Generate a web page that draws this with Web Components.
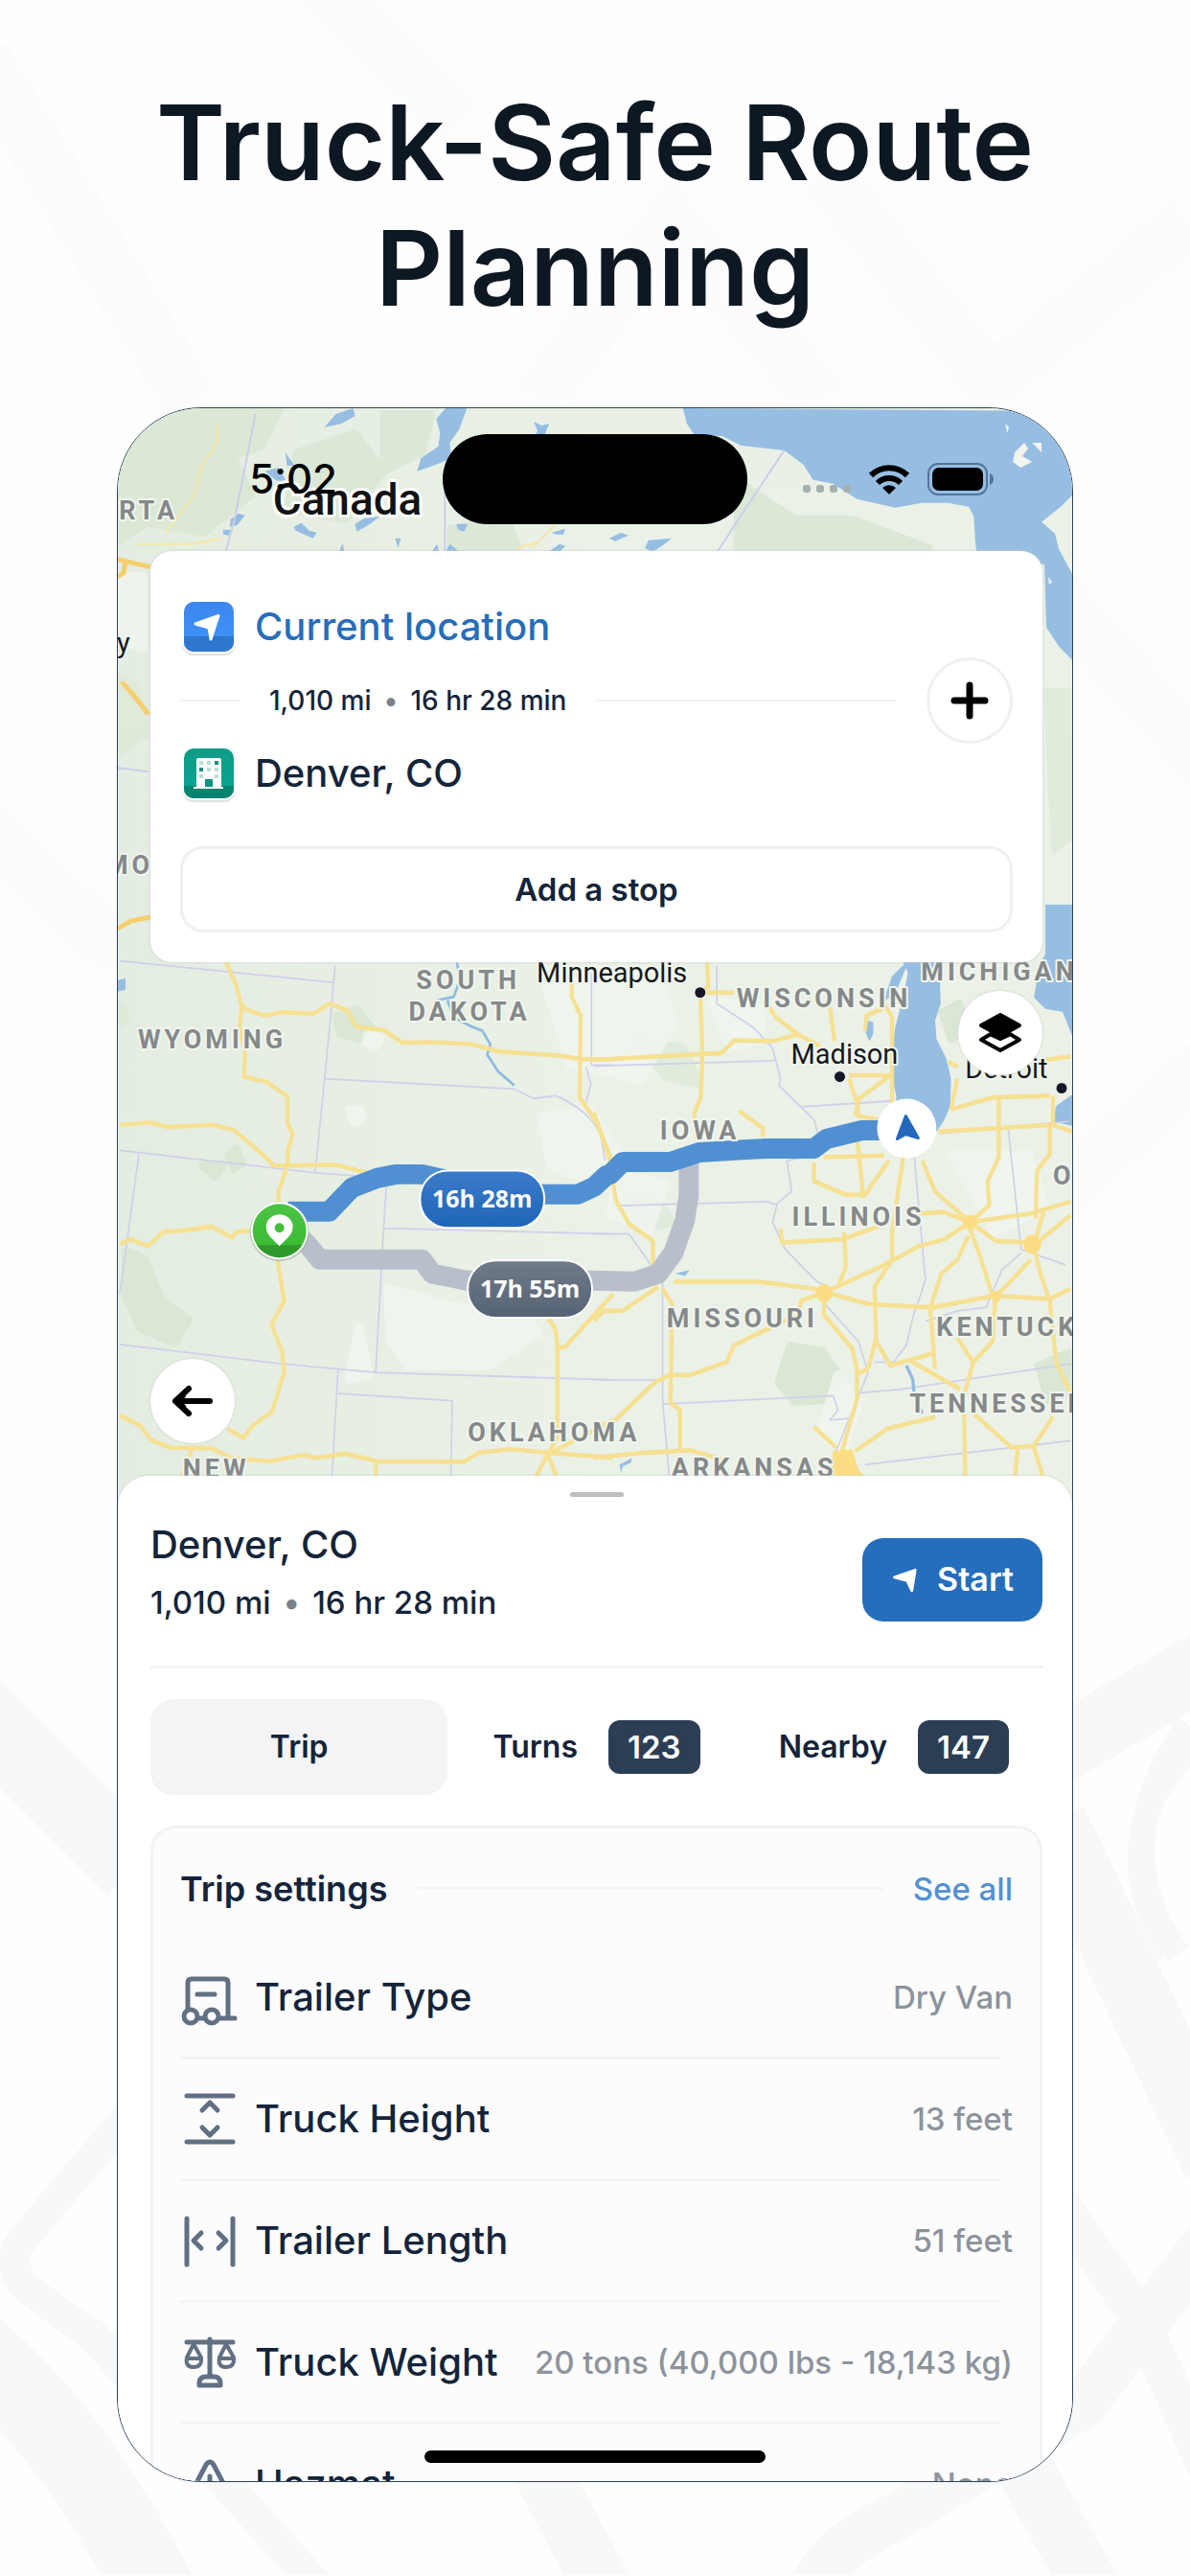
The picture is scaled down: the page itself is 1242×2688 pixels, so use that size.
<!DOCTYPE html>
<html lang="en">
<head>
<meta charset="utf-8">
<meta name="viewport" content="width=device-width, initial-scale=1">
<title>Truck-Safe Route Planning</title>
<style>
  body {
    margin: 0;
    background: #fefefe;
    color: #14243a;
    font-family: Inter, "Liberation Sans", sans-serif;
  }
</style>
</head>
<body>

<promo-screen>
  <span slot="title">Truck-Safe Route Planning</span>
  <phone-frame>
    <route-map>
      <status-bar time="5:02"></status-bar>
      <route-card>
        <route-stop icon="location" accent>Current location</route-stop>
        <trip-summary slot="summary" distance="1,010 mi" duration="16 hr 28 min"></trip-summary>
        <route-stop slot="end" icon="building">Denver, CO</route-stop>
      </route-card>
      <map-button icon="layers" label="Map layers"></map-button>
      <map-button icon="back" label="Back" bottom></map-button>
    </route-map>
    <trip-sheet>
      <span slot="title">Denver, CO</span>
      <trip-summary slot="summary" size="large" distance="1,010 mi" duration="16 hr 28 min"></trip-summary>
      <trip-tab slot="tabs" selected>Trip</trip-tab>
      <trip-tab slot="tabs" count="123">Turns</trip-tab>
      <trip-tab slot="tabs" count="147">Nearby</trip-tab>
      <settings-panel>
        <settings-row icon="trailer" value="Dry Van">Trailer Type</settings-row>
        <settings-row icon="height" value="13 feet">Truck Height</settings-row>
        <settings-row icon="length" value="51 feet">Trailer Length</settings-row>
        <settings-row icon="scales" value="20 tons (40,000 lbs - 18,143 kg)">Truck Weight</settings-row>
        <settings-row icon="hazmat" value="None">Hazmat</settings-row>
      </settings-panel>
    </trip-sheet>
  </phone-frame>
</promo-screen>

<script>
/*
 * Icons, all drawn on a 60 x 60 canvas.
 */
const line = 'fill="none" stroke="currentColor" stroke-linecap="round" stroke-linejoin="round"'

const icons = {
  location: `
    <defs>
      <linearGradient id="g" x2="0" y2="1"><stop stop-color="#3c86ec"/><stop offset="1" stop-color="#3f94fc"/></linearGradient>
      <clipPath id="c"><rect x="4" y="4" width="52" height="52" rx="10"/></clipPath>
    </defs>
    <rect x="2" y="3" width="56" height="57" rx="12" fill="#dfe1e6"/>
    <rect x="2" y="2" width="56" height="56" rx="12" fill="#fff"/>
    <g clip-path="url(#c)"><path fill="url(#g)" d="M0 0h60v60H0z"/><path fill="#2f76cf" d="M0 40h60v20H0z"/></g>
    <path d="M40 18.500 16 27l14 4 2 12z" fill="#fff" stroke="#fff" stroke-width="3" stroke-linejoin="round"/>`,
  building: `
    <defs>
      <linearGradient id="g" x2="0" y2="1"><stop stop-color="#119b85"/><stop offset="1" stop-color="#06a894"/></linearGradient>
      <clipPath id="c"><rect x="4" y="4" width="52" height="52" rx="10"/></clipPath>
    </defs>
    <rect x="2" y="3" width="56" height="57" rx="12" fill="#dfe1e6"/>
    <rect x="2" y="2" width="56" height="56" rx="12" fill="#fff"/>
    <g clip-path="url(#c)"><path fill="url(#g)" d="M0 0h60v60H0z"/><path fill="#07846f" d="M0 43h60v20H0z"/></g>
    <path fill="#fff" d="M17 16q0-2 2-2h22q2 0 2 2v28h2v2H14v-2h3z"/>
    <path fill="#b7e0d8" d="M20 17h4v4h-4zM28 17h4v4h-4zM28 24h4v4h-4zM36 24h4v4h-4zM20 31h4v4h-4zM36 31h4v4h-4z"/>
    <path fill="#0b9480" d="M36 17h4v4h-4zM20 24h4v4h-4zM26 36h8v8h-8z"/>`,
  plus: `<path ${line} stroke-width="7" d="M30 14v32M14 30h32"/>`,
  layers: `
    <path fill="currentColor" stroke="currentColor" stroke-width="4" stroke-linejoin="round" d="M30 11 50 22 30 33 10 22z"/>
    <path ${line} stroke-width="4" d="M20 31 10 37l20 11 20-11-10-6"/>
    <path fill="none" stroke="currentColor" stroke-width="4" d="M19 31l11 5 11-5"/>`,
  back: `<path ${line} stroke-width="6" d="M48 30H12M26 17 12 30l14 13M20 24l-8 6 8 6"/>`,
  start: `<path fill="#fff" stroke="#fff" stroke-width="4" stroke-linejoin="round" d="M46 16 15 27l19 5 7 15z"/>`,
  trailer: `
    <g ${line} stroke-width="5">
      <path d="M8 43V15q0-4 4-4h34q4 0 4 4v37M18 27h18M20 52h4M42 52h15"/>
      <circle cx="11" cy="50" r="7"/><circle cx="33" cy="50" r="7"/>
    </g>`,
  height: `<path ${line} stroke-width="5" d="M7 6h48M7 54h48M23 21l8-8 8 8M23 39l8 8 8-8"/>`,
  length: `<path ${line} stroke-width="5" d="M7 7v48M55 7v48M22 22l-8 8 8 8M40 22l8 8-8 8"/>`,
  scales: `
    <g ${line} stroke-width="4">
      <path stroke-width="5" d="M31 6v38M7 9h48"/>
      <path d="M14 11 7 25q-2 10 7 10t8-10zM8 26h13M48 11l-7 14q-2 10 7 10t8-10zM42 26h13"/>
      <path stroke-width="5" d="M20 54v-2q0-7 7-7h8q7 0 7 7v2z"/>
    </g>`,
  hazmat: `<path ${line} stroke-width="5" d="M31 22v15M31 46v1M27 10 8 46q-3 8 5 8h36q8 0 5-8L35 10q-4-6-8 0z"/>`
}

/**
 * Returns the markup of an icon.
 */
function icon (name, size = 60) {
  return `<svg viewBox="0 0 60 60" width="${size}" height="${size}" aria-hidden="true">${icons[name] || ''}</svg>`
}

/**
 * Shared base, fills the shadow root from render().
 */
class BaseElement extends HTMLElement {
  constructor () {
    super()
    this.attachShadow({ mode: 'open' })
  }

  connectedCallback () {
    this.shadowRoot.innerHTML = this.render()
  }
}

customElements.define('promo-screen', class extends BaseElement {
  render () {
    return `
      <style>
        :host {
          display: grid;
          overflow: hidden;
        }
        .roads, main { grid-area: 1 / 1; }
        .roads {
          width: 100%;
          height: 100%;
          min-height: 0;
          contain: size;
        }
        main {
          display: flex;
          flex-direction: column;
          gap: 80px;
          padding: 83px 122px 97px;
          position: relative;
        }
        h1 {
          margin: 0;
          color: #0e1822;
          font-size: 109px;
          line-height: 131px;
          font-weight: 600;
          text-align: center;
        }
      </style>
      <svg class="roads" viewBox="0 0 1242 2688" preserveAspectRatio="xMidYMid slice" aria-hidden="true">
        <g fill="none" stroke="#fcfcfc" stroke-width="60">
          <path d="M-20 60 200 420M330-20 480 130M1242 230 1010 420M560 420 700 230 860 420M860 180l190 240"/>
          <path d="M-20 860 130 1000M1100 620l160 180M1100 1250l160-140"/>
        </g>
        <g fill="none" stroke="#f7f8f9" stroke-width="60">
          <path d="M-30 1780 140 1950" stroke-width="80"/>
          <path d="M140 2200 30 2330q-30 30 0 60l110 80" stroke-width="32"/>
          <path d="M-30 2450Q80 2540 170 2720" stroke-width="84"/>
          <path d="M90 2430 350 2720" stroke-width="34"/>
          <path d="M560 2570 640 2720" stroke-width="60"/>
          <path d="M840 2720q20-60 90-90l200-120 130-170" stroke-width="50"/>
          <path d="M1060 2560 1150 2720"/>
          <path d="M1100 1830 1270 1730" stroke-width="70"/>
          <path d="M1270 1800q-130 100-50 240M1240 1800q-90 130-10 240" stroke-width="26"/>
          <path d="M1100 1900 1270 2260" stroke-width="70"/>
          <path d="M1100 2290 1190 2420 1270 2600" stroke-width="40"/>
        </g>
      </svg>
      <main>
        <h1><slot name="title"></slot></h1>
        <slot></slot>
      </main>
    `
  }
})

customElements.define('phone-frame', class extends BaseElement {
  render () {
    return `
      <style>
        :host {
          display: block;
          box-sizing: border-box;
          position: relative;
          aspect-ratio: 998 / 2165;
          overflow: hidden;
          border: 1px solid #2f4157;
          border-radius: 88px;
          background: #fff;
        }
        .home {
          position: absolute;
          z-index: 3;
          left: 50%;
          bottom: 19px;
          width: 356px;
          height: 13px;
          margin-left: -178px;
          border-radius: 7px;
          background: #000;
        }
      </style>
      <slot></slot>
      <div class="home"></div>
    `
  }
})

customElements.define('status-bar', class extends BaseElement {
  render () {
    return `
      <style>
        :host {
          display: grid;
          grid-template-columns: 1fr 318px 1fr;
          align-items: center;
          padding: 27px 0 28px;
          color: #000;
        }
        .time {
          padding-right: 110px;
          text-align: right;
          font-size: 42px;
          line-height: 48px;
          font-weight: 500;
        }
        .island {
          height: 94px;
          border-radius: 47px;
          background: #000;
        }
        .signs {
          display: flex;
          align-items: center;
          gap: 18px;
          padding-left: 58px;
        }
        .dots {
          display: flex;
          gap: 6px;
          padding-top: 20px;
        }
        .dots i {
          width: 8px;
          height: 8px;
          border-radius: 3px;
          background: #a3b1ae;
        }
      </style>
      <span class="time">${this.getAttribute('time')}</span>
      <span class="island"></span>
      <span class="signs">
        <span class="dots"><i></i><i></i><i></i><i></i></span>
        <svg width="44" height="32" viewBox="0 0 44 32" aria-hidden="true">
          <path fill="none" stroke="#000" stroke-width="6" d="M3 12a27 27 0 0 1 38 0M10 20a17 17 0 0 1 24 0"/>
          <path d="M22 32l-7-7a10 10 0 0 1 14 0z"/>
        </svg>
        <svg width="70" height="34" viewBox="0 0 70 34" aria-hidden="true">
          <rect x="1" y="1" width="61" height="32" rx="10" fill="none" stroke="#54749a" stroke-width="2"/>
          <rect x="5" y="5" width="53" height="24" rx="7"/>
          <path fill="#54749a" d="M65 11q4 2 4 6t-4 6z"/>
        </svg>
      </span>
    `
  }
})

customElements.define('route-map', class extends BaseElement {
  render () {
    return `
      <style>
        :host {
          display: grid;
        }
        svg, .over { grid-area: 1 / 1; }
        svg {
          display: block;
          width: 100%;
        }
        .over {
          display: flex;
          flex-direction: column;
          padding: 0 31px 70px 34px;
          z-index: 1;
        }
        ::slotted(status-bar) { margin: 0 -31px 0 -34px; }
        .labels {
          font-family: Roboto, "Liberation Sans", sans-serif;
          paint-order: stroke;
          stroke: #f1f5ee;
          stroke-width: 4px;
          stroke-linejoin: round;
        }
        .state text {
          font-size: 27px;
          font-weight: 700;
          letter-spacing: 4px;
          fill: #85898a;
        }
        .city text {
          font-size: 29px;
          fill: #15181c;
        }
        .country {
          font-size: 46px;
          font-weight: 500;
          fill: #101214;
          stroke: #fff;
          stroke-width: 6px;
        }
        .time text {
          font-family: "Open Sans", "Noto Sans", sans-serif;
          font-size: 25px;
          font-weight: 700;
          fill: #fff;
          text-anchor: middle;
        }
      </style>
      <svg viewBox="122 424 998 1152" role="img" aria-label="Route from Chicago to Denver">
        <defs>
          <linearGradient id="land"><stop stop-color="#e4ede1"/><stop offset=".5" stop-color="#eaf1e6"/><stop offset="1" stop-color="#ebf1e6"/></linearGradient>
          <linearGradient id="blue" x2="0" y2="1"><stop stop-color="#3b7ac9"/><stop offset="1" stop-color="#1f66b8"/></linearGradient>
          <linearGradient id="grey" x2="0" y2="1"><stop stop-color="#6f7b8a"/><stop offset="1" stop-color="#556374"/></linearGradient>
          <linearGradient id="green" x2="0" y2="1"><stop stop-color="#4cc445"/><stop offset="1" stop-color="#36b92f"/></linearGradient>
          <clipPath id="pin"><circle cx="291" cy="1284" r="28"/></clipPath>
        </defs>
        <path fill="url(#land)" d="M122 424h998v1152H122z"/>

        <!-- Forest and prairie -->
        <g fill="#d9e7d4" stroke="#d9e7d4" stroke-width="8" stroke-linejoin="round">
          <path d="M122 424h170l-20 40-30 10 20 40-50 40-60-10-30 20zM310 470l60-20 30 40-40 50-60-10zM400 430l50 0-10 40-40 20zM470 550l60-10 10 30-70 4zM770 500l60 40 60 0 80 30-200 4z" opacity=".8"/>
          <path d="M350 1060l22-8 14 18-12 14-20-6zM130 1305l20 8 18 44 28 20-14 24-36-14-16-34zM238 1204l8-6 6 16-8 6zM210 1216l22-2-8 14zM825 1404l34 6 16 23-14 28-32 2-16-21zM984 1056l18-10 8 24-16 14zM1085 1425l32-14v44l-22 6z"/>
          <path d="M1094 720l26 0v150l-18 16zM122 704l18 10 12 50-30 20zM122 1044l10 18-10 6zM654 1254l34 0 14 22-38 6zM664 1085l50 8 16 38-36-8z" opacity=".5"/>
        </g>
        <g fill="#f1f6ef" stroke="#f1f6ef" stroke-width="10" stroke-linejoin="round" opacity=".8">
          <path d="M565 1165l50-8 34 52-32 24-42-18zM405 1345l74 20 56-8 26 34-52 34-84 0-18-26zM565 1012l120 0 18 54-34 60-74-16zM644 1225l50 10-16 48-40-16zM995 1205l80 0 16 54-52 26zM875 1435l22 28-16 50-24-16z"/>
          <path d="M122 600l26 0 0 74-26-8zM384 1078l12 4-4 8-10-4zM374 1385l10 50-20 4zM744 1044l50 8 0 32-32 8zM365 1158l10 0 2 8-8 4z"/>
        </g>

        <!-- Lakes -->
        <g fill="#96bee2">
          <path d="M713 424l4 16 8 12 29 1 20 10 45 5 20 15 10 16 21 4 25 16 40 9 28-5 27 0 22 4 5 10 2 30 4 20h68l2 66 13 20 14 14v-90l-14-26-4-16-14-12 20-16 14-14v-86z"/>
          <path d="M338 444l12-14 18-6 2 8-14 8zM455 435l10-11 22 0-8 22-10 14 2 16-14 6-22 8 4-14 18-12 2-14zM557 438l8 4 8-2-4 10 2 6-16 0 6-8zM240 540l8-6 7 2-8 10-8 2zM232 551l8 0-2 6-6-1zM306 548l8-4 8 8 8 2-4 6-18-8zM370 545l10-6 16-2-10 8-14 8zM297 470l10 14-8 0zM276 490l14-4 8 14-10 0zM353 575l4-10 2 10zM412 560l6 0-3 10zM450 574l6-8 2 8zM465 574l4-8 10 8zM476 545l12 0-4 8-6-2zM580 556l8 0 2-6-14 4zM572 574l12-8 6 2-6 6zM636 560l12-6 8 3-14 6zM673 570l4-8 24-2-10 8-10 6z"/>
          <path d="M1092 943h28v137l-10-25-18-3-12-12 6-35 6-10z"/>
          <path d="M122 1022l8-2 0 12-8 2z"/>
        </g>
        <g fill="#f1f5ee"><path d="M1050 440l4 4-2 6zM1060 470l10-10 4 6-6 8 10 6-12 6-8-6zM1078 460l10 0 0 10zM1095 600l4 6-3 2zM1098 680l4 4z"/></g>

        <!-- Canadian roads and borders -->
        <g fill="none" stroke="#f7e6a6" stroke-width="2">
          <path d="M226 440l0 20-16 24-8 30-30 40M140 566l60 0 30-6M560 564l-20 6M595 530l-40 40"/>
          <path stroke="#f5cf6c" stroke-width="5" d="M122 582l8 2-2 12-6 4M130 584l26 6M122 968l14-8 20-4M126 710l14 16 14 18"/>
        </g>
        <path fill="none" stroke="#cbcdea" stroke-width="2" d="M266 430l-10 50-12 60-10 38M464 490l0 84M819 468l-40 60-30 46M122 800l32 4"/>

        <!-- Plains and mountain roads -->
        <g transform="translate(120 1000) scale(.3333 .3571)" fill="none" stroke-linejoin="round">
          <g stroke="#cfd0e8" stroke-width="5">
            <path d="M12 5 680 68M688 20 655 350 625 625M655 350 1250 380 1310 408 1380 400Q1480 440 1520 510L1535 590M12 560 620 625 850 642 840 788 1560 805M840 788 815 1208M72 572 12 980M12 1128 520 1185 815 1210 1560 1232M697 1205 675 1560M697 1272 1055 1293 1050 1560M1492 40V310H1560M1475 315l15 50-15 55"/>
          </g>
          <path stroke="#8ebbe2" stroke-width="8" d="M1070 10 1080 60 1060 110 1010 120M1040 120 1060 170 1110 195 1150 210 1175 250 1165 280 1200 330 1250 370"/>
          <g stroke="#f6e092" stroke-width="13">
            <path d="M345 10 375 70 392 130Q400 150 470 165L520 155 620 160 670 130 725 150 755 198 840 208 900 245 980 243 1110 248 1200 270 1400 283 1460 293 1560 293"/>
            <path d="M395 130 388 200 405 270 402 345 470 358 538 402V480L555 512 540 560 538 605 510 680V900L528 1000 488 1070 522 1150 528 1210 490 1325 430 1365 400 1402 350 1375"/>
            <path d="M12 485 110 478 165 492 300 485 370 500 470 580 495 605 690 602 800 628M12 835 45 820 100 840 150 798 210 795 300 783 365 815 380 798 420 795"/>
            <path d="M12 1335 75 1365 110 1408 170 1430 300 1432 360 1460 480 1470 590 1452 630 1460 720 1448 820 1470 1090 1472 1140 1445 1240 1435 1350 1445 1560 1460M240 1430 205 1520M815 1470V1520"/>
            <path d="M1355 1055Q1385 1070 1385 1140V1400L1355 1450 1315 1520M1355 1450 1385 1520M1355 1450 1560 1350M1385 1140 1410 1135 1560 980M1530 1030H1560M1430 40V110L1458 165 1455 405 1510 480 1560 600"/>
          </g>
        </g>

        <!-- Great Lakes and the east -->
        <g transform="translate(620 1000) scale(.3333 .3571)" fill="none" stroke-linejoin="round">
          <g fill="#96bee2">
            <path d="M960-10H1095L1085 60 1088 130 1070 180 1075 235 1105 290 1120 350 1118 430 1100 470 1075 505 950 500 948 400 930 320 945 200 970 110 985 40z"/>
            <path d="M935 50 990 0 950 90 905 130zM858 180l18 5 0 35-12 20-12-25zM1450 430l60-40v100l-70-15zM255 920l45-10-15 18zM80 1480l40-20-5 15-25 10-5 20z"/>
          </g>
          <g stroke="#cfd0e8" stroke-width="5">
            <path d="M0 313 575 297M385 20V130L500 200 560 260 585 350 580 370 690 470 705 520 660 580 605 590 620 680 575 715 560 770 600 850 700 945 740 960 725 1010 830 1120 860 1210 830 1280 790 1370 760 1440M650 432 940 415M70 722 540 710 575 720M0 805H110L160 870 215 950V1290L240 1560M0 1232H215M215 1303 750 1278 765 1320 740 1350 800 1345M1005 580 1030 840 1040 940 1000 1050 980 1130 940 1180 880 1180M1300 500 1340 850 1480 895M1340 860 1280 910 1230 1020 1140 1030 1040 1060M1090 510 1490 475M830 1270 960 1260 1495 1185M850 1480 1495 1410"/>
          </g>
          <path stroke="#8ebbe2" stroke-width="10" d="M980 1190l20 40 5 50M1015 1300l15 30"/>
          <g stroke="#f6e092" stroke-width="13">
            <path d="M0 295 200 285 400 275 440 238 560 240 640 220 710 255M355 0 358 80 333 100 340 280 335 405 315 450 320 530M333 98H440M550 140 570 170 640 220M740 140 755 240M910 130 935 170V420M905 145 855 165 850 210M800 340H930L830 410 820 460M800 350 825 420 830 460 890 470M455 445 530 495V520"/>
            <path d="M0 450 50 590 68 705 110 775 185 825V900M250 945H520L690 965 725 975 900 900 1020 840 1100 820 1180 770M725 975 860 1010 1060 1020 1260 985 1430 995 1495 965M725 975 720 1040 810 1140 825 1200V1290L790 1400 770 1470M825 1215 860 1200M725 975 650 1000 640 1040 440 1130 415 1180 300 1218H235L190 1240 60 1355 0 1370M215 965 245 1010 240 1300 270 1320V1440M0 1460 160 1445 300 1438 420 1470M0 1060 30 1030H90L200 960"/>
            <path d="M1180 770 1095 740 1020 745M1180 770 1070 680 1030 590M1180 770 1240 720 1235 650 1270 580V400M1180 770 1260 825 1370 830M1180 770 1370 745 1495 710M1180 790 1215 880 1250 985M1175 810 1140 880 1090 920 1055 1020 1070 1200M970 580 935 800V880L880 960 885 1110 860 1200M785 800 790 900 765 960M585 790 590 830 780 820 900 780M690 595V650L790 690H850L925 590M825 520 845 700M720 580 910 575"/>
            <path d="M1120 440 1250 405 1430 400M1080 505 1440 485 1500 505M1110 300l30 15M1140 350 1120 440M1430 490V570L1390 620 1385 760M1410 740 1380 840 1400 920 1430 1000 1450 1180 1495 1270M1390 830 1495 750M1370 880 1290 960 1260 985 1250 1120 1190 1180 1160 1280 1165 1520M1190 1180 1140 1110M880 1110 930 1190 1060 1155M990 1175 1150 1260M1070 1340 920 1375 820 1440M1190 1330 1310 1430 1380 1425 1440 1340M1380 1430 1410 1520M1330 1430 1320 1520M690 1370 760 1430M1380 300l115-15M1440 400V490"/>
          </g>
          <g fill="#fbde83"><circle cx="1180" cy="770" r="22"/><circle cx="1375" cy="835" r="28"/><circle cx="722" cy="978" r="26"/><circle cx="1262" cy="988" r="16"/><path d="M750 1440l60-5 20 60 20 20h-110z"/></g>
        </g>

        <!-- Routes -->
        <g fill="none" stroke-width="21" stroke-linejoin="round">
          <path stroke="#b9bfca" d="M305 1284l15 14 13 16h107l11 15 16 3 20 4h133l43 1 24-8 16-22 12-34 4-26v-34"/>
          <path stroke="#5090d2" d="M300 1264h43l24-25 26-10 20-4 27 0 27 6 20 10 40 5h76l17-8 13-12 4-1 13-13h50l30-10 70-4h50l13-10 37-9h20"/>
        </g>

        <g class="labels">
          <text class="country" x="284" y="535">Canada</text>
          <g class="state">
            <text x="42" y="540">ALBERTA</text>
            <text x="109" y="911">MO</text>
            <text x="143" y="1093">WYOMING</text>
            <text x="434" y="1031">SOUTH</text>
            <text x="426" y="1064">DAKOTA</text>
            <text x="769" y="1050">WISCONSIN</text>
            <text x="962" y="1022">MICHIGAN</text>
            <text x="689" y="1189">IOWA</text>
            <text x="1100" y="1236">OHIO</text>
            <text x="827" y="1279">ILLINOIS</text>
            <text x="696" y="1385">MISSOURI</text>
            <text x="978" y="1394">KENTUCKY</text>
            <text x="950" y="1474">TENNESSEE</text>
            <text x="488" y="1504">OKLAHOMA</text>
            <text x="190" y="1542">NEW</text>
            <text x="701" y="1541">ARKANSAS</text>
          </g>
          <g class="city">
            <text x="121" y="680">y</text>
            <text x="560" y="1024">Minneapolis</text>
            <text x="826" y="1109">Madison</text>
            <text x="1008" y="1124">Detroit</text>
          </g>
        </g>
        <g fill="#151826" stroke="#fff" stroke-width="1">
          <circle cx="731" cy="1035" r="6"/><circle cx="877" cy="1123" r="6"/><circle cx="1109" cy="1135" r="6"/>
        </g>

        <!-- Markers -->
        <circle cx="291" cy="1285" r="31" fill="#9fb09c" opacity=".6"/>
        <circle cx="291" cy="1284" r="30" fill="#fff"/>
        <g clip-path="url(#pin)"><path fill="url(#green)" d="M260 1254h62v62h-62z"/><path fill="#2f9a2b" d="M260 1299h62v20h-62z"/></g>
        <path fill="#fff" fill-rule="evenodd" d="M291 1300l-9-9q-5-5-5-11a14 13 0 0 1 28 0q0 6-5 11zM291 1276a5 5 0 1 0 0 10 5 5 0 0 0 0-10z"/>
        <circle cx="947" cy="1177" r="31" fill="#fff"/>
        <path fill="#2468bd" stroke="#2468bd" stroke-width="3" stroke-linejoin="round" d="M946 1164l-9 24 9-5 13 4z"/>
        <g class="time">
          <rect x="437" y="1220" width="132" height="62" rx="30" fill="#fff"/>
          <rect x="439" y="1222" width="128" height="58" rx="28" fill="url(#blue)"/>
          <text x="503" y="1260">16h 28m</text>
          <rect x="487" y="1314" width="132" height="62" rx="30" fill="#fff"/>
          <rect x="489" y="1316" width="128" height="58" rx="28" fill="url(#grey)"/>
          <text x="553" y="1354">17h 55m</text>
        </g>
      </svg>
      <div class="over"><slot></slot></div>
    `
  }
})

customElements.define('route-card', class extends BaseElement {
  render () {
    return `
      <style>
        :host {
          display: block;
          padding: 49px 31px 31px;
          border-radius: 22px;
          background: #fff;
          box-shadow: 0 0 3px #c8ccd0;
        }
        .route {
          display: grid;
          grid-template-columns: 1fr 90px;
          column-gap: 32px;
          align-items: center;
        }
        .between {
          display: flex;
          align-items: center;
          height: 93px;
        }
        .between::before, .between::after {
          content: "";
          height: 2px;
          background: #f0f1f2;
        }
        .between::before {
          width: 62px;
          margin-right: 31px;
        }
        .between::after {
          flex: 1;
          margin-left: 31px;
        }
        button {
          box-sizing: border-box;
          border: 3px solid #f0f0f1;
          background: #fff;
          color: #14243a;
          font: 600 33px/40px Inter, "Liberation Sans", sans-serif;
        }
        .swap {
          display: grid;
          place-items: center;
          width: 90px;
          height: 90px;
          padding: 0;
          border-radius: 50%;
          color: #000;
        }
        .add {
          width: 100%;
          height: 90px;
          margin-top: 46px;
          border-radius: 24px;
        }
      </style>
      <div class="route">
        <div>
          <slot></slot>
          <div class="between"><slot name="summary"></slot></div>
          <slot name="end"></slot>
        </div>
        <button class="swap" aria-label="Add">${icon('plus')}</button>
      </div>
      <button class="add">Add a stop</button>
    `
  }
})

customElements.define('route-stop', class extends BaseElement {
  render () {
    return `
      <style>
        :host {
          display: flex;
          align-items: center;
          gap: 18px;
          font-size: 40px;
          line-height: 48px;
          font-weight: 500;
        }
        :host([accent]) { color: #276dba; }
      </style>
      ${icon(this.getAttribute('icon'))}
      <span><slot></slot></span>
    `
  }
})

customElements.define('trip-summary', class extends BaseElement {
  render () {
    return `
      <style>
        :host {
          display: flex;
          gap: 13px;
          font-size: 28px;
          line-height: 36px;
          font-weight: 500;
          white-space: nowrap;
        }
        :host([size=large]) {
          font-size: 33px;
          line-height: 40px;
        }
        i {
          color: #7b828b;
          font-style: normal;
        }
      </style>
      <span>${this.getAttribute('distance')}</span>
      <i>•</i>
      <span>${this.getAttribute('duration')}</span>
    `
  }
})

customElements.define('map-button', class extends BaseElement {
  render () {
    return `
      <style>
        :host {
          display: block;
          align-self: flex-end;
          margin-top: 30px;
        }
        :host([bottom]) {
          align-self: flex-start;
          margin-top: auto;
        }
        button {
          display: grid;
          place-items: center;
          width: 88px;
          height: 88px;
          padding: 0;
          border: 0;
          border-radius: 50%;
          background: #fff;
          color: #000;
          box-shadow: 0 0 3px #c8d0c8;
        }
      </style>
      <button aria-label="${this.getAttribute('label')}">${icon(this.getAttribute('icon'))}</button>
    `
  }
})

customElements.define('trip-sheet', class extends BaseElement {
  render () {
    return `
      <style>
        :host {
          display: block;
          position: relative;
          z-index: 2;
          margin-top: -36px;
          padding: 17px 31px 0 34px;
          border-radius: 32px 32px 0 0;
          background: #fff;
          box-shadow: 0 0 3px #c8d0c8;
        }
        .handle {
          width: 56px;
          height: 5px;
          margin: 0 auto 26px;
          border-radius: 3px;
          background: #bbbdc0;
        }
        header {
          display: flex;
          align-items: end;
          justify-content: space-between;
          padding-bottom: 46px;
          border-bottom: 3px solid #f2f3f4;
        }
        h2 {
          margin: 0 0 16px;
          font-size: 40px;
          line-height: 48px;
          font-weight: 500;
        }
        button {
          display: flex;
          align-items: center;
          gap: 13px;
          height: 87px;
          padding: 0 30px 0 23px;
          border: 0;
          border-radius: 22px;
          background: #256dbd;
          color: #fff;
          font: 600 34px/40px Inter, "Liberation Sans", sans-serif;
        }
        .tabs {
          display: grid;
          grid-template-columns: repeat(3, 1fr);
          padding: 32px 0;
        }
      </style>
      <div class="handle"></div>
      <header>
        <div>
          <h2><slot name="title"></slot></h2>
          <slot name="summary"></slot>
        </div>
        <button>${icon('start', 42)}Start</button>
      </header>
      <div class="tabs" role="tablist"><slot name="tabs"></slot></div>
      <slot></slot>
    `
  }
})

customElements.define('trip-tab', class extends BaseElement {
  render () {
    const count = this.getAttribute('count')
    return `
      <style>
        :host { display: block; }
        button {
          display: flex;
          align-items: center;
          justify-content: center;
          gap: 32px;
          width: 100%;
          height: 100px;
          padding: 0;
          border: 0;
          border-radius: 24px;
          background: none;
          color: #14243a;
          font: 600 32px/40px Inter, "Liberation Sans", sans-serif;
        }
        :host([selected]) button { background: #f2f4f6; }
        b {
          padding: 8px 20px;
          border-radius: 12px;
          background: #2c3e54;
          color: #fff;
          font-size: 33px;
          font-weight: 600;
        }
      </style>
      <button role="tab" aria-selected="${this.hasAttribute('selected')}">
        <slot></slot>${count ? `<b>${count}</b>` : ''}
      </button>
    `
  }
})

customElements.define('settings-panel', class extends BaseElement {
  render () {
    return `
      <style>
        :host {
          display: block;
          padding: 43px 28px 0;
          border: 3px solid #f1f2f3;
          border-radius: 26px;
          background: #fcfcfd;
        }
        header {
          display: flex;
          align-items: center;
          gap: 31px;
          margin-bottom: 31px;
          font-size: 33px;
          line-height: 40px;
        }
        h3 {
          margin: 0;
          font-size: 36px;
          font-weight: 600;
        }
        .line {
          flex: 1;
          height: 3px;
          background: #f3f4f5;
        }
        a {
          color: #5490d2;
          font-weight: 500;
          text-decoration: none;
        }
      </style>
      <header>
        <h3>Trip settings</h3>
        <span class="line"></span>
        <a href="#settings">See all</a>
      </header>
      <slot></slot>
    `
  }
})

customElements.define('settings-row', class extends BaseElement {
  render () {
    return `
      <style>
        :host { display: block; }
        .row {
          display: flex;
          align-items: center;
          gap: 18px;
          height: 124px;
          font-size: 40px;
          line-height: 48px;
          font-weight: 500;
          white-space: nowrap;
        }
        svg { color: #627084; }
        .value {
          margin-left: auto;
          color: #8d939c;
          font-size: 33px;
          line-height: 40px;
        }
        hr {
          height: 3px;
          margin: 0 13px 0 0;
          border: 0;
          background: #f3f4f5;
        }
      </style>
      <div class="row">
        ${icon(this.getAttribute('icon'))}
        <span><slot></slot></span>
        <span class="value">${this.getAttribute('value')}</span>
      </div>
      <hr>
    `
  }
})
</script>
</body>
</html>
